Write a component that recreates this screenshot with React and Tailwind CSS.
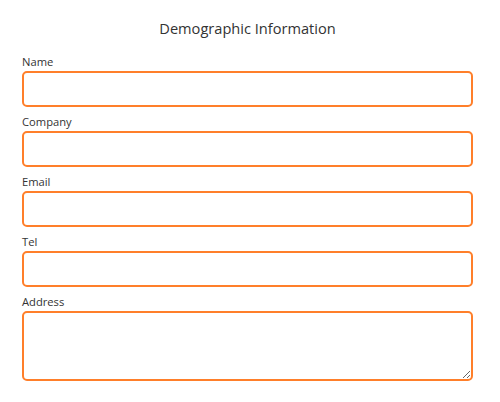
import React, { useState } from "react";

const fields = [
  { name: "name", label: "Name" },
  { name: "company", label: "Company" },
  { name: "email", label: "Email", type: "email" },
  { name: "tel", label: "Tel", type: "tel" },
];

const inputClass =
  "block w-full rounded-[5px] border-2 border-[#ff7f2a] bg-white px-2 text-[13px] text-[#333] outline-none";

const DemographicForm = () => {
  const [form, setForm] = useState({ name: "", company: "", email: "", tel: "", address: "" });

  const handleChange = (e) => {
    const { name, value } = e.target;
    setForm((prev) => ({ ...prev, [name]: value }));
  };

  return (
    <div className="min-h-[402px] bg-white pl-[22px] pr-[27px] pt-4 font-['Open_Sans',sans-serif] text-[#333]">
      <h2 className="h-6 text-center text-[14.6px] leading-6">Demographic Information</h2>

      <form className="mt-[13px] flex flex-col gap-[6px]">
        {fields.map((f) => (
          <div key={f.name}>
            <label className="block h-[18px] text-[11.2px] leading-[18px]">{f.label}</label>
            <input
              type={f.type || "text"}
              name={f.name}
              value={form[f.name]}
              onChange={handleChange}
              className={`${inputClass} h-[36px]`}
            />
          </div>
        ))}

        {/* Address gets a taller textarea */}
        <div>
          <label className="block h-[18px] text-[11.2px] leading-[18px]">Address</label>
          <textarea
            name="address"
            value={form.address}
            onChange={handleChange}
            className={`${inputClass} h-[70px] py-1`}
          />
        </div>
      </form>
    </div>
  );
};

export default function App() {
  return <DemographicForm />;
}
